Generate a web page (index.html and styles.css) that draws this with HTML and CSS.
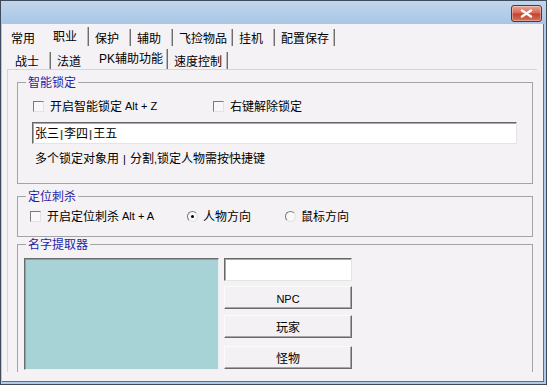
FILE: index.html
```html
<!DOCTYPE html>
<html lang="zh-CN">
  <head>
    <meta charset="UTF-8" />
    <title>PK辅助功能</title>
    <link rel="stylesheet" href="styles.css">
  </head>
  <body>
    <div class="window">
      <div class="titlebar">
        <div class="close-btn">
          <svg width="13" height="9" viewBox="0 0 13 9">
            <path d="M2 1.5 L11 7.5 M11 1.5 L2 7.5" stroke="#fff" stroke-width="2.4" stroke-linecap="round" />
          </svg>
        </div>
      </div>

      <div class="client">
        <div class="tabs main-tabs">
          <div class="tab prev">常用</div>
          <div class="tab on">职业</div>
          <div class="tab">保护</div>
          <div class="tab">辅助</div>
          <div class="tab wide">飞捡物品</div>
          <div class="tab">挂机</div>
          <div class="tab wide">配置保存</div>
        </div>

        <div class="tabs sub-tabs">
          <div class="tab">战士</div>
          <div class="tab prev">法道</div>
          <div class="tab pk on"><span class="lat">PK</span>辅助功能</div>
          <div class="tab wide">速度控制</div>
        </div>

        <div class="page">
          <!-- 智能锁定 -->
          <fieldset class="group lock-group">
            <legend>智能锁定</legend>
            <div class="row">
              <label class="opt lock-opt"><span class="box"></span>开启智能锁定<span class="lat key">Alt + Z</span></label>
              <label class="opt"><span class="box"></span>右键解除锁定</label>
            </div>
            <div class="text-input">张三<span class="lat">|</span>李四<span class="lat">|</span>王五</div>
            <div class="hint">多个锁定对象用<span class="lat pipe">|</span>分割<span class="lat">,</span>锁定人物需按快捷键</div>
          </fieldset>

          <!-- 定位刺杀 -->
          <fieldset class="group stab-group">
            <legend>定位刺杀</legend>
            <div class="row">
              <label class="opt stab-opt"><span class="box"></span>开启定位刺杀<span class="lat key">Alt + A</span></label>
              <label class="opt dir-opt"><span class="radio on"></span>人物方向</label>
              <label class="opt"><span class="radio"></span>鼠标方向</label>
            </div>
          </fieldset>

          <!-- 名字提取器 -->
          <fieldset class="group picker-group">
            <legend>名字提取器</legend>
            <div class="picker">
              <div class="listbox"></div>
              <div class="picker-side">
                <div class="name-input"></div>
                <div class="btn npc-btn"><span class="lat">NPC</span></div>
                <div class="btn player-btn">玩家</div>
                <div class="btn monster-btn">怪物</div>
              </div>
            </div>
          </fieldset>
        </div>
      </div>
    </div>
  </body>
</html>
```

FILE: styles.css
```css
* {
  box-sizing: border-box;
}

body {
  margin: 0;
  font-family: "Noto Sans CJK SC", "Noto Sans", sans-serif;
  font-size: 12px;
  line-height: 14px;
  color: #000;
}

.lat {
  font-family: "Liberation Sans", Arial, sans-serif;
  font-size: 11px;
}

.key {
  margin-left: 3px;
}

.pipe {
  margin: 0 4px;
}

.window {
  width: 547px;
  height: 385px;
  border: 1px solid #3d4b5d;
  background: #afcbea;
  display: flex;
  flex-direction: column;
}

.titlebar {
  flex: none;
  height: 23px;
  background: linear-gradient(#c1d5eb, #a9c6e7);
  display: flex;
  justify-content: flex-end;
  padding: 4px 4px 0 0;
}

.close-btn {
  width: 31px;
  height: 17px;
  border: 1px solid #6a2c24;
  border-radius: 3px;
  background: linear-gradient(#eaa698, #d76652 48%, #c4412b 52%, #d2735c);
  box-shadow: inset 0 0 0 1px rgba(255, 255, 255, 0.35);
  display: flex;
  align-items: center;
  justify-content: center;
}

.client {
  flex: 1;
  margin: 0 2px 2px 1px;
  background: #f5f2f5;
  border-right: 1px solid #5f6f83;
  border-bottom: 1px solid #5f6f83;
  display: flex;
  flex-direction: column;
}

/* tab strips */
.tabs {
  flex: none;
  display: flex;
  height: 19px;
  margin-top: 3px;
  padding-left: 3px;
}

.sub-tabs {
  height: 20px;
  padding-left: 7px;
}

.tab {
  width: 42px;
  height: 17px;
  line-height: 17px;
  margin-top: 2px;
  padding-left: 6px;
  white-space: nowrap;
  border-right: 1px solid #6e6e6e;
  box-shadow: inset -1px 0 #b8b8b8;
}

.sub-tabs .tab {
  margin-top: 3px;
}

.tab.wide {
  width: 60px;
}

.tab.pk {
  width: 75px;
}

.tab.on,
.sub-tabs .tab.on {
  margin-top: 0;
  height: 19px;
}

.sub-tabs .tab.on {
  height: 20px;
}

.tab.prev {
  border-right-color: transparent;
  box-shadow: none;
}

.tab .lat {
  font-size: 12px;
}

/* tab page */
.page {
  flex: none;
  height: 303px;
  margin: 0 6px 0 5px;
  padding: 0 4px 0 9px;
  border-top: 1px solid #d6d6d6;
  border-left: 1px solid #d6d6d6;
  overflow: hidden;
}

.group {
  margin: 0;
  padding: 0;
  min-width: 0;
  border: 1px solid #a4a4a4;
}

.group legend {
  margin-left: 8px;
  padding: 0 2px;
  line-height: 14px;
  color: #1e1ea6;
}

.lock-group {
  margin-top: 5px;
  padding-bottom: 17px;
}

.stab-group {
  margin-top: 5px;
  padding-bottom: 13px;
}

.row {
  display: flex;
  align-items: center;
  height: 14px;
}

.lock-group .row {
  margin-top: 10px;
}

.stab-group .row {
  margin-top: 6px;
}

.opt {
  display: flex;
  align-items: center;
  white-space: nowrap;
}

.lock-opt {
  width: 180px;
  margin-left: 15px;
}

.stab-opt {
  width: 157px;
  margin-left: 12px;
}

.dir-opt {
  width: 98px;
}

.box,
.radio {
  flex: none;
  width: 11px;
  height: 11px;
  margin-right: 6px;
  border: 1px solid;
  border-color: #7b7b7b #e2e2e2 #e2e2e2 #7b7b7b;
  background: #f9f8f9;
}

.radio {
  margin-right: 5px;
  border-radius: 50%;
  display: flex;
  align-items: center;
  justify-content: center;
}

.radio.on::after {
  content: "";
  width: 3px;
  height: 3px;
  border-radius: 50%;
  background: #000;
}

.text-input {
  height: 22px;
  margin: 9px 15px 0 14px;
  padding-left: 2px;
  line-height: 20px;
  background: #fff;
  border: 1px solid;
  border-color: #686868 #e4e4e4 #e4e4e4 #686868;
  box-shadow: inset 1px 1px 0 #a8a8a8;
}

.text-input .lat {
  margin: 0 1px;
  color: #555;
  font-weight: bold;
}

.hint {
  margin-top: 7px;
  padding-left: 17px;
  white-space: nowrap;
}

/* name picker */
.picker {
  display: flex;
  margin-top: 7px;
  padding: 0 0 10px 6px;
}

.listbox {
  flex: none;
  width: 195px;
  height: 112px;
  background: #a8d3d6;
  border: 1px solid;
  border-color: #6c6c6c #eeeeee #eeeeee #6c6c6c;
  box-shadow: inset 1px 1px 0 #9a9a9a;
}

.picker-side {
  width: 128px;
  margin-left: 5px;
  display: flex;
  flex-direction: column;
}

.name-input {
  height: 23px;
  background: #fff;
  border: 1px solid;
  border-color: #686868 #e4e4e4 #e4e4e4 #686868;
  box-shadow: inset 1px 1px 0 #a8a8a8;
}

.btn {
  height: 23px;
  line-height: 21px;
  text-align: center;
  background: #f4f1f4;
  border: 1px solid;
  border-color: #fbfbfb #6a6a6a #6a6a6a #fbfbfb;
  box-shadow: inset -1px -1px 0 #a6a6a6;
}

.npc-btn {
  margin-top: 5px;
}

.player-btn {
  margin-top: 6px;
}

.monster-btn {
  margin-top: 8px;
}
```
